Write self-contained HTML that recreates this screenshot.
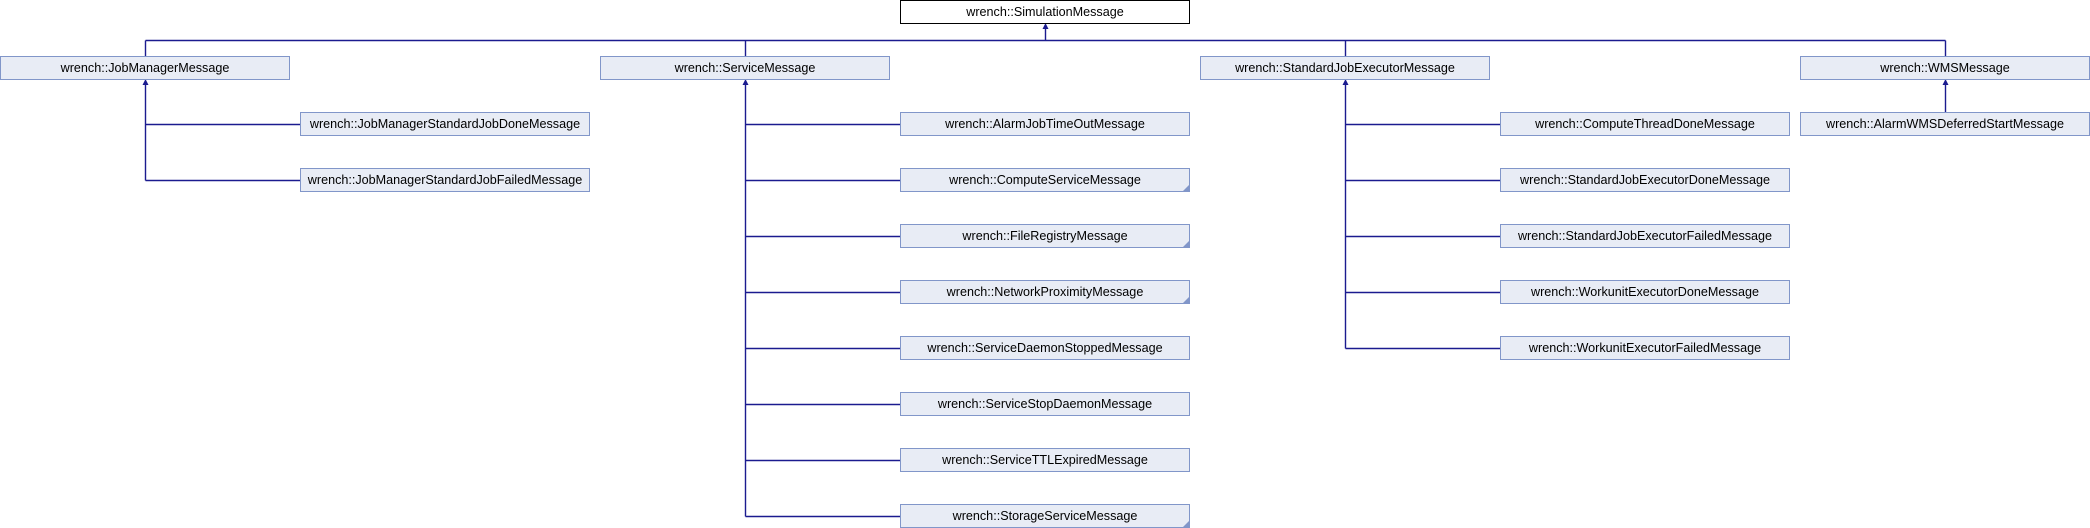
<!DOCTYPE html>
<html><head><meta charset="utf-8"><style>
html,body{margin:0;padding:0;background:#fff;width:2090px;height:528px;overflow:hidden;position:relative}
.b{position:absolute;box-sizing:border-box;width:290px;height:24px;background:#e8ecf5;border:1px solid #8196c9;font:12.6px "Liberation Sans",Arial,sans-serif;color:#000;text-align:center;line-height:22px;white-space:nowrap}
.t{background:#fff;border-color:#000}
.c::after{content:"";position:absolute;right:0;bottom:0;width:0;height:0;border-left:6px solid transparent;border-bottom:6px solid #8196c9}
svg{position:absolute;left:0;top:0}
</style></head><body>
<svg width="2090" height="528" fill="none" stroke="#1b1b8f" stroke-width="1.4">
<path d="M1045.5 27V40.5M145.5 40.5H1945.5M145.5 40.5V56M745.5 40.5V56M1345.5 40.5V56M1945.5 40.5V56"/>
<path d="M145.5 83V180.5M145.5 124.5H300M145.5 180.5H300"/>
<path d="M745.5 83V516.5M745.5 124.5H900M745.5 180.5H900M745.5 236.5H900M745.5 292.5H900M745.5 348.5H900M745.5 404.5H900M745.5 460.5H900M745.5 516.5H900"/>
<path d="M1345.5 83V348.5M1345.5 124.5H1500M1345.5 180.5H1500M1345.5 236.5H1500M1345.5 292.5H1500M1345.5 348.5H1500"/>
<path d="M1945.5 83V112"/>
<g fill="#1b1b8f" stroke="none">
<path d="M1045.5 23l-3 6h6z"/><path d="M145.5 79l-3 6h6z"/><path d="M745.5 79l-3 6h6z"/><path d="M1345.5 79l-3 6h6z"/><path d="M1945.5 79l-3 6h6z"/>
</g>
</svg>
<div class="b t" style="left:900px;top:0">wrench::SimulationMessage</div>
<div class="b" style="left:0;top:56px">wrench::JobManagerMessage</div>
<div class="b" style="left:600px;top:56px">wrench::ServiceMessage</div>
<div class="b" style="left:1200px;top:56px">wrench::StandardJobExecutorMessage</div>
<div class="b" style="left:1800px;top:56px">wrench::WMSMessage</div>

<div class="b" style="left:300px;top:112px">wrench::JobManagerStandardJobDoneMessage</div>
<div class="b" style="left:300px;top:168px">wrench::JobManagerStandardJobFailedMessage</div>

<div class="b" style="left:900px;top:112px">wrench::AlarmJobTimeOutMessage</div>
<div class="b c" style="left:900px;top:168px">wrench::ComputeServiceMessage</div>
<div class="b c" style="left:900px;top:224px">wrench::FileRegistryMessage</div>
<div class="b c" style="left:900px;top:280px">wrench::NetworkProximityMessage</div>
<div class="b" style="left:900px;top:336px">wrench::ServiceDaemonStoppedMessage</div>
<div class="b" style="left:900px;top:392px">wrench::ServiceStopDaemonMessage</div>
<div class="b" style="left:900px;top:448px">wrench::ServiceTTLExpiredMessage</div>
<div class="b c" style="left:900px;top:504px">wrench::StorageServiceMessage</div>

<div class="b" style="left:1500px;top:112px">wrench::ComputeThreadDoneMessage</div>
<div class="b" style="left:1500px;top:168px">wrench::StandardJobExecutorDoneMessage</div>
<div class="b" style="left:1500px;top:224px">wrench::StandardJobExecutorFailedMessage</div>
<div class="b" style="left:1500px;top:280px">wrench::WorkunitExecutorDoneMessage</div>
<div class="b" style="left:1500px;top:336px">wrench::WorkunitExecutorFailedMessage</div>

<div class="b" style="left:1800px;top:112px">wrench::AlarmWMSDeferredStartMessage</div>
</body></html>
